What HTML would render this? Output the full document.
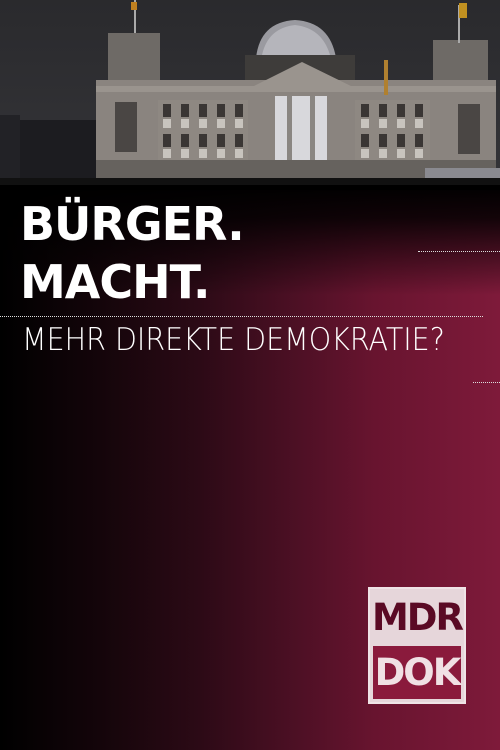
<!DOCTYPE html>
<html><head><meta charset="utf-8"><style>
html,body{margin:0;padding:0}
body{width:500px;height:750px;position:relative;overflow:hidden;background:linear-gradient(90deg,#000 0%,#14050a 20%,#2c0a16 40%,#4e1025 60%,#68142f 75%,#7e1a3a 100%);font-family:"DejaVu Sans","Liberation Sans",sans-serif}
svg.top{position:absolute;left:0;top:0}
.shade{position:absolute;left:0;top:185px;width:500px;height:110px;background:linear-gradient(180deg,#000 0%,rgba(0,0,0,.85) 30%,rgba(0,0,0,0) 100%)}
.t{position:absolute;left:20px;color:#fff;font-weight:bold;font-size:46px;line-height:52px;letter-spacing:-1px}
.sub{position:absolute;left:22px;top:322px;color:#fff;font-size:31px;font-weight:200;font-family:"DejaVu Sans","Liberation Sans",sans-serif;white-space:nowrap;transform:scaleX(0.92);transform-origin:left}
.dl{position:absolute;height:0;border-top:1px dotted #ddd}
.logo{position:absolute;left:368px;top:587px;width:98px;height:117px;background:#e6d6da;box-sizing:border-box;border:2px solid #efe3e6}
.logo .a{height:56px;text-align:center;color:#5a0a24;font-weight:bold;font-size:37px;line-height:58px;letter-spacing:-2px}
.logo .b{position:absolute;left:3px;right:3px;bottom:3px;height:53px;background:#8a1a3c;text-align:center;color:#f0e0e4;font-weight:bold;font-size:37px;line-height:54px;letter-spacing:-2px}
</style></head><body>
<svg class="top" width="500" height="190" viewBox="0 0 500 190">
<defs>
<linearGradient id="sky" x1="0" y1="0" x2="0" y2="1"><stop offset="0" stop-color="#2a2a2d"/><stop offset="1" stop-color="#343438"/></linearGradient>
<pattern id="win" width="18" height="30" patternUnits="userSpaceOnUse" x="158" y="100"><rect width="18" height="30" fill="#8e8882"/><rect x="5" y="4" width="8" height="13" fill="#3a3634"/><rect x="5" y="19" width="8" height="9" fill="#c8c4be"/></pattern>
</defs>
<rect width="500" height="190" fill="url(#sky)"/>
<rect x="18" y="120" width="80" height="60" fill="#1c1c20"/>
<rect x="0" y="115" width="20" height="65" fill="#222226"/>
<path d="M256 58 Q260 22 295 20 Q330 22 336 58 Z" fill="#9a9aa0"/>
<path d="M262 55 Q268 28 295 25 Q322 28 330 55 Z" fill="#c0c0c6" opacity=".7"/>
<rect x="108" y="33" width="52" height="55" fill="#6e6a66"/>
<rect x="433" y="40" width="55" height="50" fill="#6e6a66"/>
<rect x="245" y="55" width="110" height="30" fill="#3e3c3a"/>
<rect x="96" y="80" width="400" height="100" fill="#8a847f"/>
<rect x="96" y="86" width="400" height="6" fill="#9a948e"/>
<polygon points="250,88 302,62 355,88" fill="#9a948e"/>
<rect x="158" y="100" width="90" height="60" fill="url(#win)"/>
<rect x="355" y="100" width="75" height="60" fill="url(#win)"/>
<rect x="275" y="96" width="52" height="66" fill="#d8d8dc"/>
<rect x="287" y="96" width="5" height="66" fill="#8a8682"/><rect x="310" y="96" width="5" height="66" fill="#8a8682"/>
<rect x="115" y="102" width="22" height="50" fill="#4a4644"/>
<rect x="458" y="104" width="22" height="50" fill="#4a4644"/>
<rect x="96" y="160" width="400" height="20" fill="#66625e"/>
<rect x="425" y="168" width="75" height="20" fill="#8a8a90"/>
<rect x="134" y="0" width="2" height="33" fill="#aaa"/><rect x="131" y="2" width="6" height="8" fill="#c08020"/>
<rect x="458" y="5" width="2" height="38" fill="#aaa"/><rect x="459" y="3" width="8" height="15" fill="#c09020"/>
<rect x="384" y="60" width="4" height="35" fill="#b08030"/>
<rect x="0" y="178" width="500" height="12" fill="#111"/>
</svg>
<div class="shade"></div>
<div class="t" style="top:198px">BÜRGER.</div>
<div class="t" style="top:256px">MACHT.</div>
<div class="dl" style="left:0;width:483px;top:316px"></div>
<div class="dl" style="left:418px;width:82px;top:251px"></div>
<div class="dl" style="left:473px;width:27px;top:382px"></div>
<div class="sub">MEHR DIREKTE DEMOKRATIE?</div>
<div class="logo"><div class="a">MDR</div><div class="b">DOK</div></div>
</body></html>
